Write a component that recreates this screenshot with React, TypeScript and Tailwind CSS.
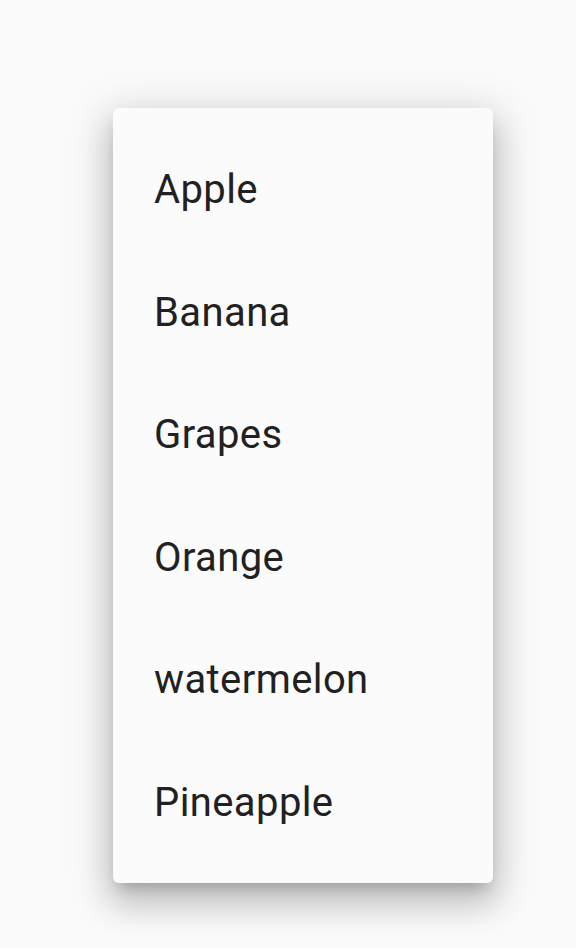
const fruits = ['Apple', 'Banana', 'Grapes', 'Orange', 'watermelon', 'Pineapple']

export default function App() {
  return (
    <div className="min-h-[948px] w-full bg-[#fafafa] pt-[108px] font-['Roboto',sans-serif]">
      <div className="ml-[113px] w-[380px] rounded-[6px] bg-[#fbfbfb] pt-[21px] pb-[19px] shadow-[0_20px_32px_4px_rgba(0,0,0,0.14),0_8px_40px_8px_rgba(0,0,0,0.12),0_10px_14px_-6px_rgba(0,0,0,0.2)]">
        {fruits.map((f) => (
          <div key={f} className="flex h-[122.5px] items-center pl-[41px] text-[40px] leading-none tracking-[0.4px] text-[#212121]">
            {f}
          </div>
        ))}
      </div>
    </div>
  )
}
